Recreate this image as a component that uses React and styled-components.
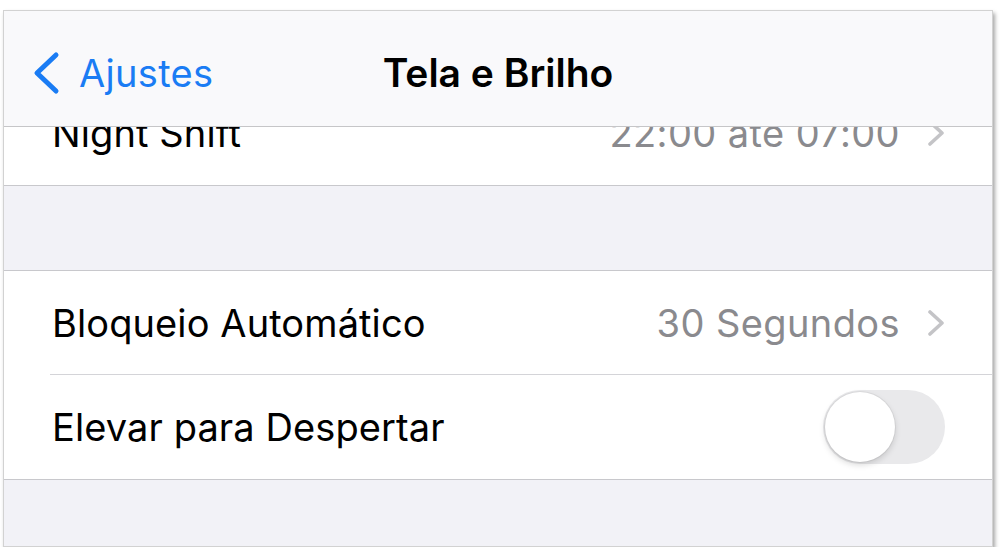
import React, { useState } from "react";
import styled, { createGlobalStyle } from "styled-components";

const GlobalStyle = createGlobalStyle`
  html, body {
    margin: 0;
    padding: 0;
    background: #ffffff;
  }
  body {
    font-family: Inter, "Noto Sans", "Liberation Sans", sans-serif;
    -webkit-font-smoothing: antialiased;
  }
`;

const Frame = styled.div`
  margin: 10px 0 0 3px;
  width: 990px;
  height: 537px;
  box-sizing: border-box;
  border: 1px solid #d2d2d2;
  box-shadow: 2px 3px 4px rgba(0, 0, 0, 0.35);
  overflow: hidden;
  display: flex;
  flex-direction: column;
  background: #f2f2f7;
`;

const NavBar = styled.div`
  position: relative;
  z-index: 2;
  flex: none;
  height: 116px;
  padding: 8px 28px 0 28px;
  box-sizing: border-box;
  border-bottom: 1px solid #c6c6c8;
  background: #f9f9fb;
  display: grid;
  grid-template-columns: 1fr auto 1fr;
  align-items: center;
`;

const BackButton = styled.div`
  display: flex;
  align-items: center;
  gap: 19px;
  color: #1a7cf4;
  font-size: 38px;
  letter-spacing: 0.3px;
`;

const Title = styled.div`
  font-size: 39px;
  font-weight: 600;
  color: #000;
  letter-spacing: 0;
`;

const Body = styled.div`
  flex: 1;
  overflow: hidden;
`;

const Scroller = styled.div`
  margin-top: -47px;
`;

const Group = styled.div`
  background: #ffffff;
  border-top: 1px solid #c8c8cc;
  border-bottom: 1px solid #c8c8cc;
  margin-top: ${(p) => p.$gap || 0}px;
`;

const Row = styled.div`
  padding-left: 46px;
`;

const RowInner = styled.div`
  height: ${(p) => (p.$last ? 104 : 103)}px;
  display: flex;
  align-items: center;
  padding-right: 47px;
  border-bottom: ${(p) => (p.$last ? "none" : "1px solid #d4d4d8")};
`;

const Label = styled.div`
  flex: 1;
  padding-left: 2px;
  font-size: 38px;
  color: #000;
  letter-spacing: 0.1px;
`;

const Value = styled.div`
  font-size: 38px;
  color: #8a8a8e;
  margin-right: 27px;
  letter-spacing: 0.4px;
`;

const Track = styled.div`
  width: 122px;
  height: 74px;
  border-radius: 37px;
  background: ${(p) => (p.$on ? "#34c759" : "#e9e9eb")};
  padding: 2px;
  box-sizing: border-box;
  display: flex;
  justify-content: ${(p) => (p.$on ? "flex-end" : "flex-start")};
  cursor: pointer;
`;

const Knob = styled.div`
  width: 70px;
  height: 70px;
  border-radius: 50%;
  background: #ffffff;
  box-shadow: 0 3px 6px rgba(0, 0, 0, 0.15), 0 0 0 1px rgba(0, 0, 0, 0.05);
`;

const Chevron = () => (
  <svg width="18" height="26" viewBox="0 0 18 26">
    <polyline
      points="3,2 15,13 3,24"
      fill="none"
      stroke="#c4c4c7"
      strokeWidth="3.6"
      strokeLinecap="round"
      strokeLinejoin="round"
    />
  </svg>
);

const BackChevron = () => (
  <svg width="28" height="44" viewBox="0 0 28 44">
    <polyline
      points="24,4 5,22 24,40"
      fill="none"
      stroke="#1a7cf4"
      strokeWidth="5"
      strokeLinecap="round"
      strokeLinejoin="round"
    />
  </svg>
);

const App = () => {
  const [raise, setRaise] = useState(false);

  return (
    <>
      <GlobalStyle />
      <Frame>
        <NavBar>
          <BackButton>
            <BackChevron />
            Ajustes
          </BackButton>
          <Title>Tela e Brilho</Title>
          <div />
        </NavBar>
        <Body>
          <Scroller>
            <Group>
              <Row>
                <RowInner $last>
                  <Label>Night Shift</Label>
                  <Value>22:00 até 07:00</Value>
                  <Chevron />
                </RowInner>
              </Row>
            </Group>
            <Group $gap={84}>
              <Row>
                <RowInner>
                  <Label>Bloqueio Automático</Label>
                  <Value>30 Segundos</Value>
                  <Chevron />
                </RowInner>
              </Row>
              <Row>
                <RowInner $last>
                  <Label>Elevar para Despertar</Label>
                  <Track $on={raise} onClick={() => setRaise(!raise)}>
                    <Knob />
                  </Track>
                </RowInner>
              </Row>
            </Group>
          </Scroller>
        </Body>
      </Frame>
    </>
  );
};

export default App;
